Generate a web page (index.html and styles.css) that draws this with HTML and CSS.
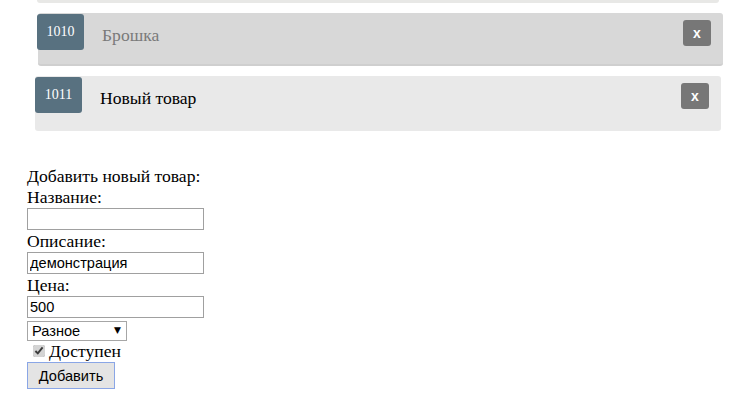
FILE: index.html
```html
<!DOCTYPE html>
<html lang="ru">
<head>
<meta charset="utf-8">
<title>Товары</title>
<link rel="stylesheet" href="styles.css">
</head>
<body>
<ul class="list">
  <li class="card card-top"></li>
  <li class="card card-muted card-shift">
    <span class="badge">1010</span>
    <span class="title title-muted">Брошка</span>
    <button class="remove" type="button">x</button>
  </li>
  <li class="card card-light">
    <span class="badge">1011</span>
    <span class="title">Новый товар</span>
    <button class="remove" type="button">x</button>
  </li>
</ul>
<form class="form">
  <div class="line heading">Добавить новый товар:</div>
  <div class="line">Название:</div>
  <input class="field" type="text" value="">
  <div class="line">Описание:</div>
  <input class="field" type="text" value="демонстрация">
  <div class="line">Цена:</div>
  <input class="field" type="text" value="500">
  <div class="select-wrap">
    <select class="select"><option>Разное</option></select>
    <span class="arrow">▼</span>
  </div>
  <label class="check-line"><input class="check" type="checkbox" checked> Доступен</label>
  <button class="submit" type="button">Добавить</button>
</form>
</body>
</html>
```

FILE: styles.css
```css
html, body {
  margin: 0;
  padding: 0;
  background: #ffffff;
  font-family: "Liberation Serif", "Times New Roman", serif;
  color: #000;
}

.list {
  list-style: none;
  margin: 0;
  padding: 0 0 0 35px;
  display: flex;
  flex-direction: column;
  gap: 10px;
  width: 690px;
}

.card {
  display: flex;
  align-items: flex-start;
  height: 54px;
  border-radius: 3px;
  box-sizing: border-box;
  position: relative;
}

.card-top {
  margin-top: -51px;
  margin-left: 2px;
  width: 682px;
  background: #e8e8e6;
}

.card-muted {
  background: #d8d8d8;
  border-bottom: 2px solid #cfcfcf;
  width: 685px;
  height: 53px;
}

.card-shift {
  margin-left: 3px;
}

.card-light {
  background: #e9e9e9;
  width: 686px;
  height: 55px;
}

.badge {
  margin-top: 1px;
  width: 47px;
  height: 36px;
  background: #587180;
  color: #fff;
  font-size: 14px;
  line-height: 36px;
  text-align: center;
  border-radius: 3px;
  flex: none;
}

.card-shift .badge {
  margin-left: -1px;
}

.title {
  margin-left: 18px;
  margin-top: 11px;
  font-size: 17.6px;
  line-height: 22px;
  flex: 1;
}

.title-muted {
  color: #7a7a7a;
}

.remove {
  margin: 7px 12px 0 0;
  width: 28px;
  height: 26px;
  border: none;
  border-radius: 3px;
  background: #777777;
  color: #fff;
  font-family: "Liberation Sans", Arial, sans-serif;
  font-weight: bold;
  font-size: 14px;
  line-height: 26px;
  padding: 0;
}

.form {
  margin: 35px 0 0 27px;
  display: flex;
  flex-direction: column;
  align-items: flex-start;
  font-size: 17.6px;
}

.line {
  line-height: 22px;
}

.heading {
  line-height: 20px;
}

.field {
  width: 177px;
  height: 22px;
  box-sizing: border-box;
  margin: 0;
  border: 1px solid #a0a0a0;
  padding: 1px 2px;
  font-family: "Liberation Sans", Arial, sans-serif;
  font-size: 14.6px;
  color: #000;
  border-radius: 0;
  outline: none;
}

.select-wrap {
  position: relative;
  margin-top: 2px;
  width: 100px;
  height: 20px;
}

.select {
  appearance: none;
  -webkit-appearance: none;
  width: 100px;
  height: 20px;
  box-sizing: border-box;
  margin: 0;
  border: 1px solid #a6a6a6;
  border-radius: 0;
  background: #fff;
  padding: 0 0 0 4px;
  font-family: "Liberation Sans", Arial, sans-serif;
  font-size: 14.6px;
  color: #000;
}

.arrow {
  position: absolute;
  right: 6px;
  top: 4px;
  font-size: 9px;
  line-height: 12px;
  font-family: "DejaVu Sans", sans-serif;
  pointer-events: none;
}

.check-line {
  display: flex;
  align-items: center;
  height: 22px;
  font-size: 17.6px;
  line-height: 22px;
}

.check {
  margin: 0 4px 0 6px;
  width: 12px;
  height: 12px;
  accent-color: #d4d4d4;
}

.submit {
  margin: 0;
  width: 88px;
  height: 27px;
  box-sizing: border-box;
  border: 1px solid #8aa6e6;
  background: #e4e4e4;
  border-radius: 0;
  font-family: "Liberation Sans", Arial, sans-serif;
  font-size: 14.6px;
  color: #000;
  padding: 0;
}
```
